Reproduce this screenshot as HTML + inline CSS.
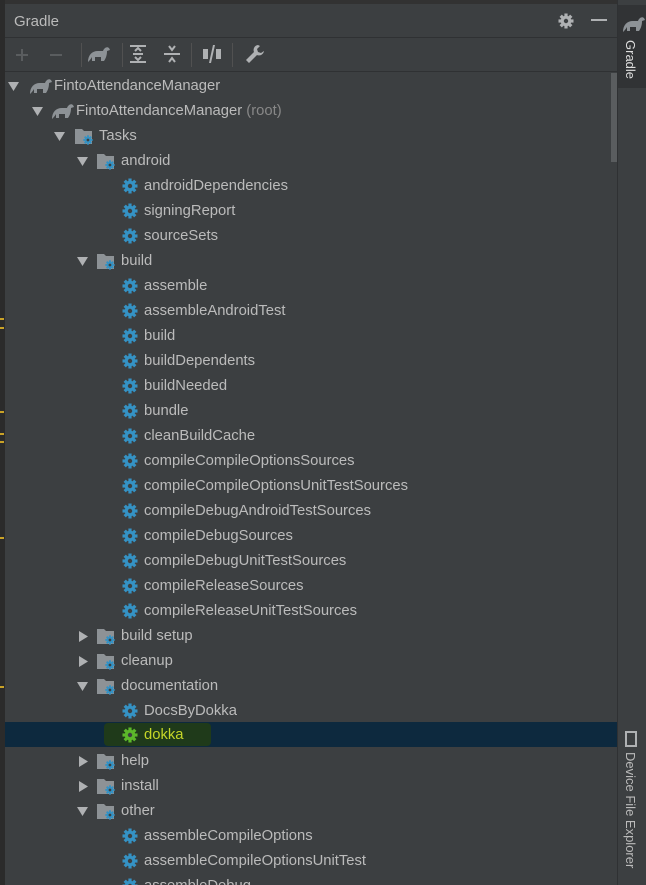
<!DOCTYPE html>
<html><head><meta charset="utf-8"><style>
*{margin:0;padding:0;box-sizing:border-box}
html,body{width:646px;height:885px;overflow:hidden}
body{background:#3c3f41;font-family:"Liberation Sans",sans-serif;position:relative}
.lstrip{position:absolute;left:0;top:0;width:5px;height:885px;background:#2b2b2b}
.mk{position:absolute;left:0;width:4px;height:2px;background:#c9a227}
.panel{position:absolute;left:5px;top:0;width:612px;height:885px;background:#3c3f41}
.hdr{position:absolute;left:0;top:0;width:612px;height:38px;border-top:4px solid #323232;border-bottom:1px solid #2f3133}
.hdr .t{position:absolute;left:9px;top:9px;font-size:15px;color:#bbb}
.tb{position:absolute;left:0;top:38px;width:612px;height:34px;border-bottom:1px solid #2f3133}
.sep{position:absolute;top:43px;width:1px;height:24px;background:#515151}
.rstrip{position:absolute;left:617px;top:0;width:29px;height:885px;background:#3c3f41;border-left:1px solid #2f3133}
.tab{position:absolute;left:618px;top:5px;width:28px;height:83px;background:#313335}
.vt{position:absolute;writing-mode:vertical-rl;color:#ddd;font-size:13px}
.row{position:absolute;left:5px;width:612px;height:25px;color:#bbb;font-size:14.8px}
.row span{position:absolute;top:4px;white-space:nowrap}
.row svg{position:absolute}
.sel{background:#0d293e}
.gr{color:#888}
.scroll{position:absolute;left:606px;top:73px;width:10px;height:89px;background:#5a5d5f}
</style></head><body>
<svg width="0" height="0" style="position:absolute"><defs>
<g id="gear"><circle cx="8" cy="8" r="5.3" fill="currentColor"/><g stroke="currentColor" stroke-width="3.2"><line x1="8" y1="0.5" x2="8" y2="15.5"/><line x1="0.5" y1="8" x2="15.5" y2="8"/><line x1="2.7" y1="2.7" x2="13.3" y2="13.3"/><line x1="13.3" y1="2.7" x2="2.7" y2="13.3"/></g><circle cx="8" cy="8" r="2.2" fill="#3c3f41"/></g>
<g id="fold"><path d="M0 2h7l2 2h8v13H0z" fill="#8d9296"/><g transform="translate(8,8) scale(0.62)" color="#3592c4"><use href="#gear"/></g></g>
<g id="ele"><path d="M1 18c0-7 4-11 10-11h5c1-3 4-5 6-3l1 2-3 1c0 4-1 7-3 10h-3v-4h-6v4H5v-4c-1 2-3 4-4 5z" fill="#8d9296"/></g>
<g id="down"><path d="M0 0h11L5.5 9z" fill="#afb1b3"/></g>
<g id="right"><path d="M0 0v11l9-5.5z" fill="#afb1b3"/></g>
</defs></svg>
<div class="lstrip"></div>
<div class="mk" style="top:318px"></div><div class="mk" style="top:327px"></div><div class="mk" style="top:411px"></div><div class="mk" style="top:433px"></div><div class="mk" style="top:441px"></div><div class="mk" style="top:537px"></div><div class="mk" style="top:686px"></div>
<div class="panel">
<div class="hdr"><div class="t">Gradle</div>
<svg style="position:absolute;left:553px;top:9px" width="16" height="16" color="#afb1b3"><use href="#gear"/></svg>
<div style="position:absolute;left:586px;top:15px;width:16px;height:2px;background:#afb1b3"></div></div>
<div class="tb">
<div style="position:absolute;left:11px;top:16px;width:12px;height:2px;background:#5a5d5f"></div><div style="position:absolute;left:16px;top:11px;width:2px;height:12px;background:#5a5d5f"></div>
<div style="position:absolute;left:45px;top:16px;width:12px;height:2px;background:#5a5d5f"></div>
<svg style="position:absolute;left:82px;top:6px" width="24" height="20"><use href="#ele"/></svg>
<svg style="position:absolute;left:124px;top:6px" width="18" height="20" fill="none" stroke="#afb1b3" stroke-width="2"><line x1="1" y1="2" x2="17" y2="2"/><line x1="1" y1="18" x2="17" y2="18"/><line x1="4" y1="10" x2="14" y2="10"/><path d="M6 7l3-3 3 3M6 13l3 3 3-3"/></svg>
<svg style="position:absolute;left:158px;top:6px" width="18" height="20" fill="none" stroke="#afb1b3" stroke-width="2"><line x1="1" y1="10" x2="17" y2="10"/><path d="M6 2l3 4 3-4M6 18l3-4 3 4"/></svg>
<svg style="position:absolute;left:197px;top:6px" width="20" height="20" fill="#afb1b3"><rect x="1" y="5" width="5" height="10"/><rect x="14" y="5" width="5" height="10"/><path d="M11 1h2L9 19H7z"/></svg>
<svg style="position:absolute;left:240px;top:6px" width="20" height="20" fill="#afb1b3"><path d="M13 1a5 5 0 0 0-4 7L1 16l3 3 8-8a5 5 0 0 0 7-4l-3 2-3-1-1-3 3-3z"/></svg>
</div>
<div class="sep" style="left:76px"></div><div class="sep" style="left:117px"></div><div class="sep" style="left:186px"></div><div class="sep" style="left:227px"></div>
<div class="scroll"></div>
</div>
<div class="rstrip"></div>
<div class="tab"><svg style="position:absolute;left:4px;top:9px" width="24" height="20"><use href="#ele"/></svg><div class="vt" style="left:5px;top:35px">Gradle</div></div>
<svg style="position:absolute;left:625px;top:731px" width="12" height="16" fill="none" stroke="#afb1b3" stroke-width="2"><rect x="1" y="1" width="10" height="14"/></svg>
<div class="vt" style="left:623px;top:752px;color:#bbb">Device File Explorer</div>

<div class="row" style="top:74px"><svg style="left:3px;top:8px" width="11" height="10"><use href="#down"/></svg><svg style="left:24px;top:2px" width="24" height="20"><use href="#ele"/></svg><span style="left:49px">FintoAttendanceManager</span></div>
<div class="row" style="top:99px"><svg style="left:27px;top:8px" width="11" height="10"><use href="#down"/></svg><svg style="left:46px;top:2px" width="24" height="20"><use href="#ele"/></svg><span style="left:71px">FintoAttendanceManager <i class="gr" style="font-style:normal">(root)</i></span></div>
<div class="row" style="top:124px"><svg style="left:49px;top:8px" width="11" height="10"><use href="#down"/></svg><svg style="left:70px;top:3px" width="20" height="20"><use href="#fold"/></svg><span style="left:94px">Tasks</span></div>
<div class="row" style="top:149px"><svg style="left:72px;top:8px" width="11" height="10"><use href="#down"/></svg><svg style="left:92px;top:3px" width="20" height="20"><use href="#fold"/></svg><span style="left:116px">android</span></div>
<div class="row" style="top:174px"><svg style="left:117px;top:4px" width="16" height="16" color="#3592c4"><use href="#gear"/></svg><span style="left:139px">androidDependencies</span></div>
<div class="row" style="top:199px"><svg style="left:117px;top:4px" width="16" height="16" color="#3592c4"><use href="#gear"/></svg><span style="left:139px">signingReport</span></div>
<div class="row" style="top:224px"><svg style="left:117px;top:4px" width="16" height="16" color="#3592c4"><use href="#gear"/></svg><span style="left:139px">sourceSets</span></div>
<div class="row" style="top:249px"><svg style="left:72px;top:8px" width="11" height="10"><use href="#down"/></svg><svg style="left:92px;top:3px" width="20" height="20"><use href="#fold"/></svg><span style="left:116px">build</span></div>
<div class="row" style="top:274px"><svg style="left:117px;top:4px" width="16" height="16" color="#3592c4"><use href="#gear"/></svg><span style="left:139px">assemble</span></div>
<div class="row" style="top:299px"><svg style="left:117px;top:4px" width="16" height="16" color="#3592c4"><use href="#gear"/></svg><span style="left:139px">assembleAndroidTest</span></div>
<div class="row" style="top:324px"><svg style="left:117px;top:4px" width="16" height="16" color="#3592c4"><use href="#gear"/></svg><span style="left:139px">build</span></div>
<div class="row" style="top:349px"><svg style="left:117px;top:4px" width="16" height="16" color="#3592c4"><use href="#gear"/></svg><span style="left:139px">buildDependents</span></div>
<div class="row" style="top:374px"><svg style="left:117px;top:4px" width="16" height="16" color="#3592c4"><use href="#gear"/></svg><span style="left:139px">buildNeeded</span></div>
<div class="row" style="top:399px"><svg style="left:117px;top:4px" width="16" height="16" color="#3592c4"><use href="#gear"/></svg><span style="left:139px">bundle</span></div>
<div class="row" style="top:424px"><svg style="left:117px;top:4px" width="16" height="16" color="#3592c4"><use href="#gear"/></svg><span style="left:139px">cleanBuildCache</span></div>
<div class="row" style="top:449px"><svg style="left:117px;top:4px" width="16" height="16" color="#3592c4"><use href="#gear"/></svg><span style="left:139px">compileCompileOptionsSources</span></div>
<div class="row" style="top:474px"><svg style="left:117px;top:4px" width="16" height="16" color="#3592c4"><use href="#gear"/></svg><span style="left:139px">compileCompileOptionsUnitTestSources</span></div>
<div class="row" style="top:499px"><svg style="left:117px;top:4px" width="16" height="16" color="#3592c4"><use href="#gear"/></svg><span style="left:139px">compileDebugAndroidTestSources</span></div>
<div class="row" style="top:524px"><svg style="left:117px;top:4px" width="16" height="16" color="#3592c4"><use href="#gear"/></svg><span style="left:139px">compileDebugSources</span></div>
<div class="row" style="top:549px"><svg style="left:117px;top:4px" width="16" height="16" color="#3592c4"><use href="#gear"/></svg><span style="left:139px">compileDebugUnitTestSources</span></div>
<div class="row" style="top:574px"><svg style="left:117px;top:4px" width="16" height="16" color="#3592c4"><use href="#gear"/></svg><span style="left:139px">compileReleaseSources</span></div>
<div class="row" style="top:599px"><svg style="left:117px;top:4px" width="16" height="16" color="#3592c4"><use href="#gear"/></svg><span style="left:139px">compileReleaseUnitTestSources</span></div>
<div class="row" style="top:624px"><svg style="left:74px;top:7px" width="10" height="11"><use href="#right"/></svg><svg style="left:92px;top:3px" width="20" height="20"><use href="#fold"/></svg><span style="left:116px">build setup</span></div>
<div class="row" style="top:649px"><svg style="left:74px;top:7px" width="10" height="11"><use href="#right"/></svg><svg style="left:92px;top:3px" width="20" height="20"><use href="#fold"/></svg><span style="left:116px">cleanup</span></div>
<div class="row" style="top:674px"><svg style="left:72px;top:8px" width="11" height="10"><use href="#down"/></svg><svg style="left:92px;top:3px" width="20" height="20"><use href="#fold"/></svg><span style="left:116px">documentation</span></div>
<div class="row" style="top:699px"><svg style="left:117px;top:4px" width="16" height="16" color="#3592c4"><use href="#gear"/></svg><span style="left:139px">DocsByDokka</span></div>
<div class="row sel" style="top:722px;height:25px"><div style="position:absolute;left:99px;top:1px;width:107px;height:23px;background:#1f3a1a;border-radius:4px"></div><svg style="left:117px;top:5px" width="16" height="16" color="#5cb82a"><use href="#gear"/></svg><span style="left:139px;top:5px;color:#c5d628">dokka</span></div>
<div class="row" style="top:749px"><svg style="left:74px;top:7px" width="10" height="11"><use href="#right"/></svg><svg style="left:92px;top:3px" width="20" height="20"><use href="#fold"/></svg><span style="left:116px">help</span></div>
<div class="row" style="top:774px"><svg style="left:74px;top:7px" width="10" height="11"><use href="#right"/></svg><svg style="left:92px;top:3px" width="20" height="20"><use href="#fold"/></svg><span style="left:116px">install</span></div>
<div class="row" style="top:799px"><svg style="left:72px;top:8px" width="11" height="10"><use href="#down"/></svg><svg style="left:92px;top:3px" width="20" height="20"><use href="#fold"/></svg><span style="left:116px">other</span></div>
<div class="row" style="top:824px"><svg style="left:117px;top:4px" width="16" height="16" color="#3592c4"><use href="#gear"/></svg><span style="left:139px">assembleCompileOptions</span></div>
<div class="row" style="top:849px"><svg style="left:117px;top:4px" width="16" height="16" color="#3592c4"><use href="#gear"/></svg><span style="left:139px">assembleCompileOptionsUnitTest</span></div>
<div class="row" style="top:874px"><svg style="left:117px;top:4px" width="16" height="16" color="#3592c4"><use href="#gear"/></svg><span style="left:139px">assembleDebug</span></div>
</body></html>
